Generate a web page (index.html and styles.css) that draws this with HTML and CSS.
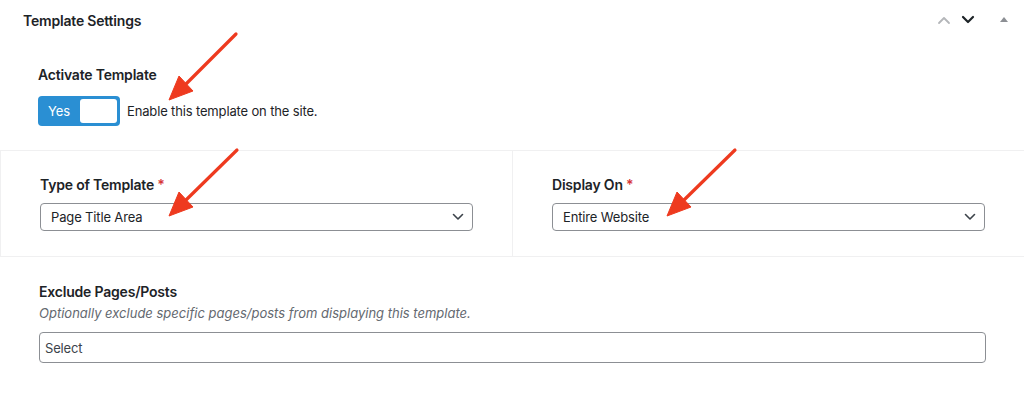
FILE: index.html
```html
<!DOCTYPE html>
<html lang="en">
<head>
    <meta charset="UTF-8">
    <meta name="viewport" content="width=device-width, initial-scale=1.0">
    <title>Template Settings</title>
    <link rel="stylesheet" href="styles.css">
</head>
<body>
    <div class="postbox">
        <div class="postbox-header">
            <h2 class="postbox-title">Template Settings</h2>
            <div class="handle-actions">
                <span class="handle-btn">
                    <svg width="14" height="10" viewBox="0 0 14 10"><path d="M2 8 L7 3 L12 8" class="chev-muted" /></svg>
                </span>
                <span class="handle-btn">
                    <svg width="14" height="10" viewBox="0 0 14 10"><path d="M2 2 L7 7 L12 2" class="chev-dark" /></svg>
                </span>
                <span class="handle-btn toggle-indicator">
                    <svg width="10" height="8" viewBox="0 0 10 8"><polygon points="5,1 9,6 1,6" /></svg>
                </span>
            </div>
        </div>

        <div class="inside">
            <div class="field field-activate">
                <label class="field-label">Activate Template</label>
                <div class="switch-row">
                    <span class="switch">
                        <span class="switch-on">Yes</span>
                        <span class="switch-knob"></span>
                    </span>
                    <span class="switch-desc">Enable this template on the site.</span>
                </div>
            </div>

            <div class="field-row">
                <div class="field field-cell">
                    <label class="field-label">Type of Template <span class="required">*</span></label>
                    <div class="select">
                        <span>Page Title Area</span>
                        <svg width="12" height="8" viewBox="0 0 12 8"><path d="M1.5 1.5 L6 6 L10.5 1.5" /></svg>
                    </div>
                </div>
                <div class="field field-cell">
                    <label class="field-label">Display On <span class="required">*</span></label>
                    <div class="select">
                        <span>Entire Website</span>
                        <svg width="12" height="8" viewBox="0 0 12 8"><path d="M1.5 1.5 L6 6 L10.5 1.5" /></svg>
                    </div>
                </div>
            </div>

            <div class="field field-exclude">
                <label class="field-label">Exclude Pages/Posts</label>
                <p class="field-help">Optionally exclude specific pages/posts from displaying this template.</p>
                <div class="multi-select">Select</div>
            </div>
        </div>
    </div>

    <!-- annotation arrows drawn on top of the screenshot -->
    <svg class="annotations" width="1024" height="399" viewBox="0 0 1024 399">
        <line x1="236" y1="34" x2="186" y2="84" />
        <polygon points="169,100 193,91 179,76" />
        <line x1="237" y1="150" x2="186" y2="200" />
        <polygon points="169,216 193,207 179,192" />
        <line x1="735" y1="150" x2="684" y2="200" />
        <polygon points="667,216 691,207 677,192" />
    </svg>
</body>
</html>
```

FILE: styles.css
```css
:root {
    --text-color: #1d2327;
    --muted-text: #646970;
    --line-color: #f0f0f1;
    --input-border: #8c8f94;
    --switch-blue: #2a8fd3;
    --required: #d63638;
    --arrow-red: #ee3a1f;
}

* {
    box-sizing: border-box;
    margin: 0;
    padding: 0;
}

body {
    font-family: Inter, "Noto Sans", "Liberation Sans", sans-serif;
    font-size: 13px;
    letter-spacing: -0.15px;
    color: var(--text-color);
    background: #ffffff;
    width: 1024px;
    height: 399px;
    overflow: hidden;
    position: relative;
}

.postbox-header {
    display: flex;
    justify-content: space-between;
    align-items: center;
    height: 40px;
    padding: 0 13px 0 23px;
}

.postbox-title {
    font-size: 14px;
    font-weight: 600;
    letter-spacing: -0.2px;
}

.handle-actions {
    display: flex;
    align-items: center;
    gap: 10px;
}

.handle-btn {
    display: flex;
    align-items: center;
    justify-content: center;
    width: 14px;
}

.handle-btn path {
    fill: none;
    stroke-width: 1.8;
    stroke-linecap: round;
    stroke-linejoin: round;
}

.chev-muted {
    stroke: #b4b6b9;
}

.chev-dark {
    stroke: #1d2327;
    stroke-width: 2.2 !important;
}

.toggle-indicator {
    margin-left: 12px;
}

.toggle-indicator polygon {
    fill: #8c8f94;
}

.field-label {
    display: block;
    font-size: 14px;
    font-weight: 600;
    line-height: 18px;
    letter-spacing: -0.2px;
}

.required {
    color: var(--required);
}

.field-activate {
    padding: 26px 38px 24px;
}

.switch-row {
    display: flex;
    align-items: center;
    gap: 7px;
    margin-top: 12px;
}

.switch {
    display: flex;
    align-items: center;
    width: 82px;
    height: 30px;
    padding: 3px;
    background: var(--switch-blue);
    border-radius: 4px;
}

.switch-on {
    flex: 1;
    color: #ffffff;
    text-align: center;
    font-size: 13px;
    padding-right: 3px;
}

.switch-knob {
    width: 37px;
    height: 24px;
    background: #ffffff;
    border-radius: 3px;
}

.field-row {
    display: grid;
    grid-template-columns: 512px 512px;
    border-top: 1px solid var(--line-color);
    border-bottom: 1px solid var(--line-color);
}

.field-cell {
    padding: 25px 39px 25px 39px;
    border-left: 1px solid var(--line-color);
}

.field-cell .field-label {
    margin-bottom: 9px;
}

.select {
    display: flex;
    justify-content: space-between;
    align-items: center;
    height: 28px;
    padding: 0 8px 0 10px;
    border: 1px solid var(--input-border);
    border-radius: 4px;
    font-size: 13px;
}

.select path {
    fill: none;
    stroke: #3c434a;
    stroke-width: 1.6;
    stroke-linecap: round;
    stroke-linejoin: round;
}

.field-exclude {
    padding: 26px 38px 0 39px;
}

.field-help {
    font-style: italic;
    color: var(--muted-text);
    line-height: 18px;
    letter-spacing: 0;
    margin-top: 3px;
}

.multi-select {
    height: 31px;
    margin-top: 10px;
    padding: 0 5px;
    display: flex;
    align-items: center;
    border: 1px solid var(--input-border);
    border-radius: 4px;
    color: #3c434a;
    font-size: 13px;
}

.annotations {
    position: absolute;
    top: 0;
    left: 0;
    pointer-events: none;
}

.annotations line {
    stroke: var(--arrow-red);
    stroke-width: 3.2;
    stroke-linecap: round;
}

.annotations polygon {
    fill: var(--arrow-red);
    stroke: var(--arrow-red);
    stroke-width: 1;
    stroke-linejoin: round;
}
```
